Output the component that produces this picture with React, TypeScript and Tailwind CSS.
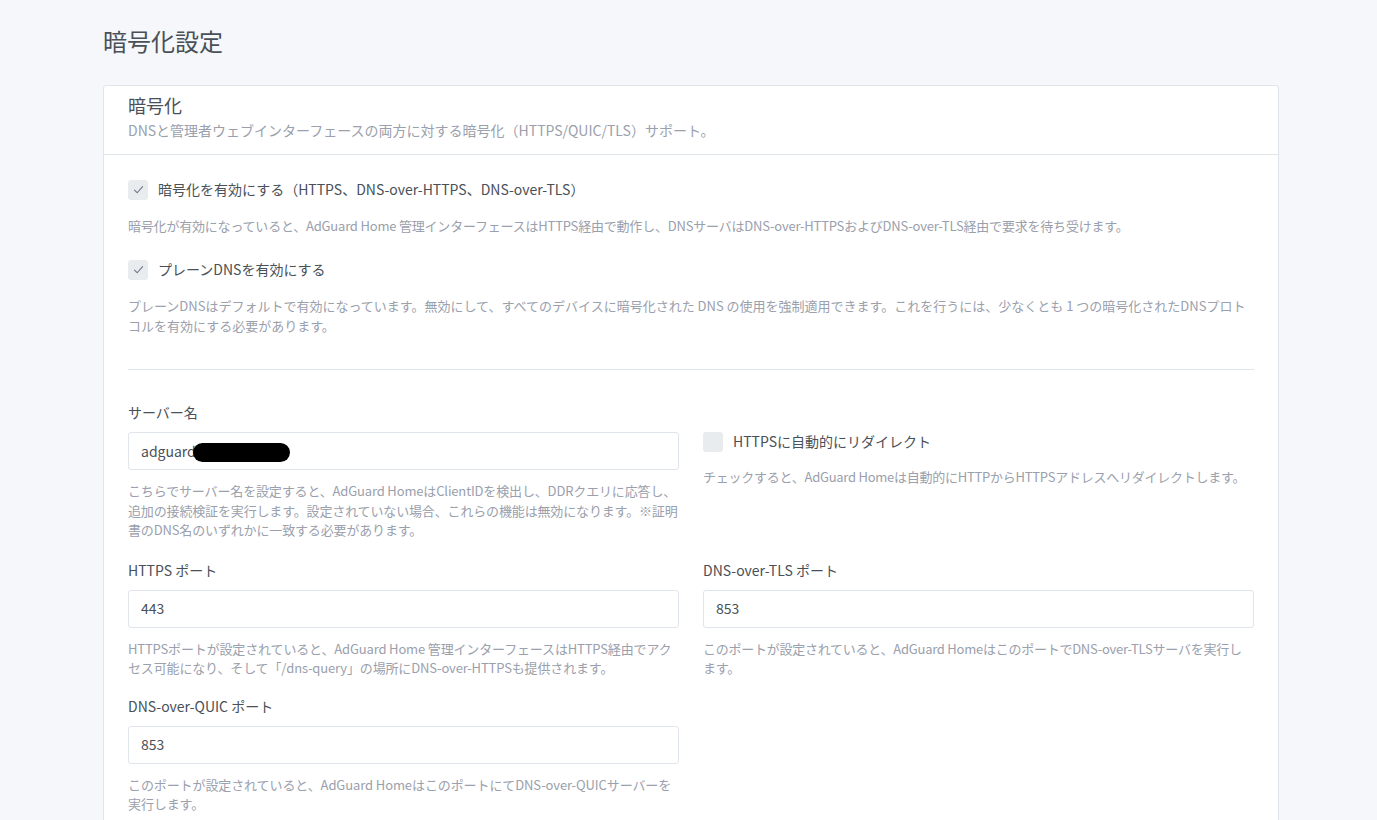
import { ReactNode } from 'react'

const font = { fontFamily: '"Noto Sans CJK JP", "Noto Sans", sans-serif' }

function CheckBox({ checked, label }: { checked: boolean; label: string }) {
  return (
    <label className="flex items-center gap-[10px]">
      <span className="flex h-[20px] w-[20px] items-center justify-center rounded-[3px] bg-[#e9ecef]">
        {checked && (
          <svg width="13" height="13" viewBox="0 0 12 12" fill="none">
            <path d="M2 6.3 L4.8 9 L10 3.2" stroke="#6e7687" strokeWidth="1" />
          </svg>
        )}
      </span>
      <span className="text-[14px] leading-[21px] text-[#495057]">{label}</span>
    </label>
  )
}

function Field({
  label,
  value,
  help,
  className,
  helpClass,
  children,
}: {
  label: string
  value: string
  help: ReactNode
  className: string
  helpClass: string
  children?: ReactNode
}) {
  return (
    <div className={className}>
      <div className="mb-[9px] text-[14px] leading-[21px] text-[#495057]">{label}</div>
      <div className="relative flex h-[38px] items-center rounded-[3px] border border-[#e0e5ec] bg-white px-[12px] text-[14px] text-[#495057]">
        {value}
        {children}
      </div>
      <p className={'mt-[11px] text-[13px] leading-[19.5px] text-[#9aa0ac] ' + helpClass}>{help}</p>
    </div>
  )
}

export default function App() {
  return (
    <div className="min-h-screen bg-[#f5f7fb]" style={font}>
      <div className="ml-[103px] w-[1176px] pt-[26px]">
        <h1 className="mb-[30px] text-[24px] font-normal leading-[29px] text-[#495057]">暗号化設定</h1>

        <div className="rounded-[3px] border border-[#e0e5ec] bg-white">
          <div className="border-b border-[#e0e5ec] px-[24px] pt-[7px] pb-[14px]">
            <div className="text-[18px] leading-[24px] text-[#495057]">暗号化</div>
            <div className="mt-[3px] text-[14px] leading-[20px] text-[#9aa0ac]">
              DNSと管理者ウェブインターフェースの両方に対する暗号化（HTTPS/QUIC/TLS）サポート。
            </div>
          </div>

          <div className="px-[24px] pt-[24px]">
            <CheckBox checked label="暗号化を有効にする（HTTPS、DNS-over-HTTPS、DNS-over-TLS）" />
            <p className="mt-[16px] text-[13px] leading-[20px] tracking-[-0.2px] text-[#9aa0ac]">
              暗号化が有効になっていると、AdGuard Home 管理インターフェースはHTTPS経由で動作し、DNSサーバはDNS-over-HTTPSおよびDNS-over-TLS経由で要求を待ち受けます。
            </p>

            <div className="mt-[23px]">
              <CheckBox checked label="プレーンDNSを有効にする" />
            </div>
            <p className="mt-[16px] text-[13px] leading-[20px] text-[#9aa0ac]">
              プレーンDNSはデフォルトで有効になっています。無効にして、すべてのデバイスに暗号化された DNS の使用を強制適用できます。これを行うには、少なくとも 1 つの暗号化されたDNSプロトコルを有効にする必要があります。
            </p>

            <hr className="mt-[33px] mb-[32px] border-t border-[#e0e5ec]" />

            <div className="grid grid-cols-2 gap-x-[24px]">
              <Field
                className="mb-[20px]"
                helpClass="tracking-[-0.15px]"
                label="サーバー名"
                value="adguard"
                help="こちらでサーバー名を設定すると、AdGuard HomeはClientIDを検出し、DDRクエリに応答し、追加の接続検証を実行します。設定されていない場合、これらの機能は無効になります。※証明書のDNS名のいずれかに一致する必要があります。"
              >
                <span className="absolute left-[64px] top-[10px] h-[19px] w-[97px] rounded-full bg-black" />
              </Field>

              <div className="pt-[29px]">
                <CheckBox checked={false} label="HTTPSに自動的にリダイレクト" />
                <p className="mt-[15px] text-[13px] leading-[20px] tracking-[-0.25px] text-[#9aa0ac]">
                  チェックすると、AdGuard Homeは自動的にHTTPからHTTPSアドレスへリダイレクトします。
                </p>
              </div>

              <Field
                className="mb-[18px]"
                helpClass="tracking-[-0.15px]"
                label="HTTPS ポート"
                value="443"
                help="HTTPSポートが設定されていると、AdGuard Home 管理インターフェースはHTTPS経由でアクセス可能になり、そして「/dns-query」の場所にDNS-over-HTTPSも提供されます。"
              />

              <Field
                className="mb-[18px]"
                helpClass="tracking-[-0.25px]"
                label="DNS-over-TLS ポート"
                value="853"
                help="このポートが設定されていると、AdGuard HomeはこのポートでDNS-over-TLSサーバを実行します。"
              />

              <Field
                className="mb-[18px]"
                helpClass="tracking-[-0.1px]"
                label="DNS-over-QUIC ポート"
                value="853"
                help="このポートが設定されていると、AdGuard HomeはこのポートにてDNS-over-QUICサーバーを実行します。"
              />
            </div>
          </div>
        </div>
      </div>
    </div>
  )
}
